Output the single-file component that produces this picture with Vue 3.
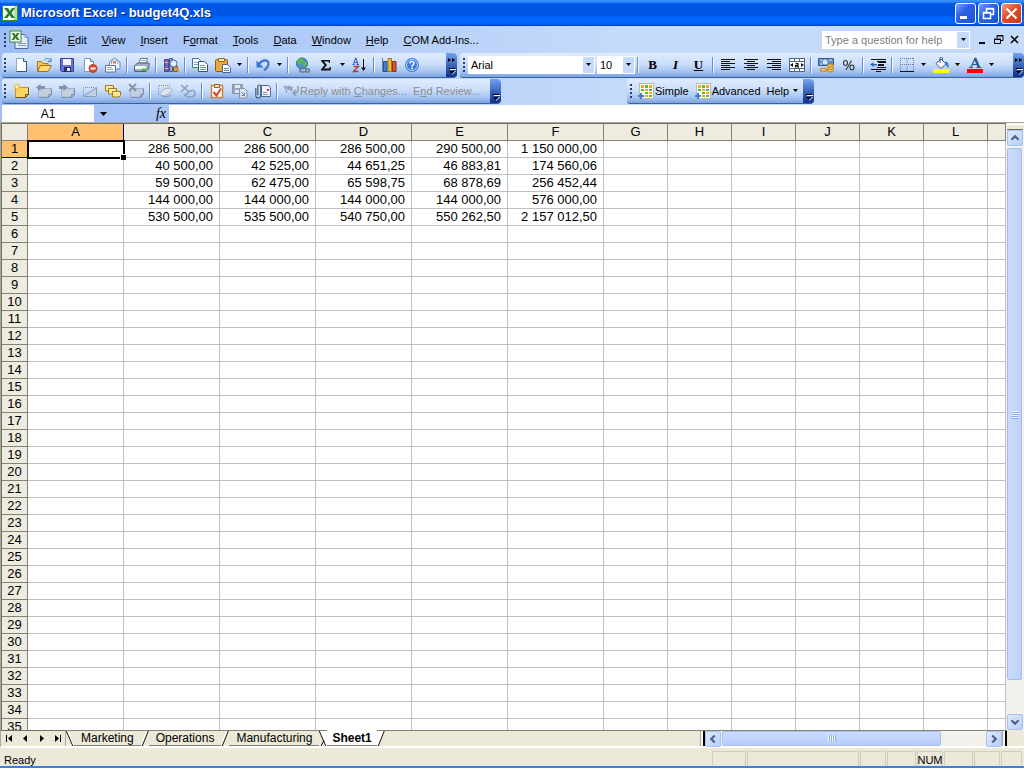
<script setup>
import { ref } from 'vue'

const menus = [
  ['', 'F', 'ile'], ['', 'E', 'dit'], ['', 'V', 'iew'], ['', 'I', 'nsert'], ['F', 'o', 'rmat'],
  ['', 'T', 'ools'], ['', 'D', 'ata'], ['', 'W', 'indow'], ['', 'H', 'elp'], ['', 'C', 'OM Add-Ins...']
]

const page = '<path d="M3.500 1.500h7l3 3v10h-10z" fill="#fff" stroke="#8fa9d0"/><path d="M10.500 1.500v3h3" fill="#cfe0f8" stroke="#3b5a8c"/><path d="M13.500 4.500v10h-10" fill="none" stroke="#33507f"/>'
const greyNote = '<path d="M2.500 5.500h12.500v6l-2.500 2.500h-10z" fill="#c3cede" stroke="#a3b0c6"/><path d="M2.500 14.500h10l3-3V5.500M12.500 14v-2.500H15" fill="none" stroke="#8191ad"/>'
const smallNote = (x, y) => `<path d="M${x} ${y}h8v4l-1.500 1.500h-6.500z" fill="#fbe48a" stroke="#a37a17"/><path d="M${x + 1} ${y + 1}h5" stroke="#fff6c8"/>`
const lines = (rows) => '<g fill="#111">' + rows.map(([x, w], i) => `<rect x="${x}" y="${2 + i * 2}" width="${w}" height="1"/>`).join('') + '</g>'
const schedule = '<rect x="1.500" y=".5" width="14" height="15" fill="#fff" stroke="#b9b9a8"/><g fill="#f5a51d"><rect x="3" y="2" width="3" height="3"/><rect x="11" y="2" width="3" height="3"/><rect x="7" y="6" width="3" height="2"/><rect x="11" y="9" width="3" height="2"/><rect x="7" y="12" width="3" height="2"/></g><g fill="#58bd2e"><rect x="7" y="2" width="3" height="3"/><rect x="3" y="6" width="3" height="2"/><rect x="11" y="6" width="3" height="2"/><rect x="7" y="9" width="3" height="2"/><rect x="11" y="12" width="3" height="2"/></g><path d="M3 10v6M0 13h6" stroke="#3d82d8" stroke-width="2"/>'

const icons = {
  excel: '<rect x=".5" y=".5" width="15" height="15" fill="#f7fff2" stroke="#3c8a35"/><path d="M12 1h3v14h-3z" fill="#b6dcae"/><path d="M2 3h4l2 3 2-3h3L9.500 8 13 13H9.500L7.500 10 5.500 13H2L6 8z" fill="#24812a"/>',
  workbook: '<path d="M8 4.500h8l3 3v11H6v-8" fill="#dfebff" stroke="#516b9c"/><path d="M16 4.500v3h3M9 13.500h8M9 15.500h8" fill="none" stroke="#7f9ccf"/><rect x="1" y="1" width="11" height="11" fill="#f7fff2" stroke="#3c8a35"/><path d="M2.500 3H5l1.500 2L8 3h2.500L8 6.500 10.500 10H8L6.500 8 5 10H2.500L5 6.500z" fill="#24812a"/>',
  new: page,
  open: '<path d="M1.500 14V4.500h4l1.500 2h5V9" fill="#f2c64e" stroke="#a07a22"/><path d="M1.500 14.500L4.500 8.500H15.500L12 14.500z" fill="#ffd878" stroke="#97721b"/><path d="M8 3.500c2-3 5-2.500 6.500 0m.5-2.500v3.500H11.500" fill="none" stroke="#4670a8"/>',
  save: '<path d="M1.500 1.500h13v13h-12l-1-1z" fill="#6b70d8" stroke="#3a3f9e"/><path d="M4 2h8v6H4z" fill="#f2f5ff"/><path d="M5 10h7v5H5z" fill="#272c63"/><path d="M8 11h3v3H8z" fill="#e3e6f8"/>',
  permission: '<path d="M2.500 1.500h6l3 3v10h-9z" fill="#fff" stroke="#7f98c0"/><path d="M8.500 1.500v3h3" fill="#cfe0f8" stroke="#5f7fae"/><circle cx="11" cy="11.500" r="4" fill="#e2472b" stroke="#c2391f"/><path d="M8.500 11.500h5" stroke="#fff" stroke-width="2"/>',
  mail: '<path d="M4.500 10V5L9.500 1l5.500 4v7h-4" fill="#eef4ff" stroke="#6b84ab"/><path d="M6.500 7V4h6v3" fill="#fff" stroke="#9aacc8"/><path d="M8 4.500h3v2H8z" fill="#e2653d"/><path d="M.5 8.500h10v6.500h-10z" fill="#fff" stroke="#5d7398"/><path d="M2 10.500h5M2 12.500h6" stroke="#8fa3c2"/>',
  print: '<path d="M4.500 7L6.500 1.500h7L12 7z" fill="#fff" stroke="#5f7691"/><path d="M7 3.500h5M6.500 5.500h5" stroke="#9aaac0"/><path d="M.5 9l3-3H15v5l-3 3.500H.5z" fill="#9fb0c2" stroke="#4f6175"/><path d="M1 9h11v3H1z" fill="#f0f4f8"/><path d="M8 11.500h4v2.500H8z" fill="#4bbd35"/>',
  research: '<path d="M1.500 2.500h4v12h-4z" fill="#7a5fc0" stroke="#4d3b91"/><path d="M1.500 5.500h4M1.500 11.500h4" stroke="#e5c65c"/><path d="M6.500 1.500h3v13h-3z" fill="#8fa6e8" stroke="#3d5aa0"/><path d="M10.500 9.500h4v5h-4z" fill="#d8a347" stroke="#80581a"/><circle cx="10.500" cy="6.500" r="3.500" fill="#dff0ff" stroke="#4d6c94"/><path d="M12.500 10l3 4" stroke="#d58a25" stroke-width="2"/>',
  copy: '<path d="M.5 1.500h6l2 2v7h-8z" fill="#fff" stroke="#4269a8"/><path d="M2 5.500h5M2 7.500h5" stroke="#7b9fd6"/><path d="M6.500 4.500h6l3 3v7h-9z" fill="#fff" stroke="#2c4f8d"/><path d="M8 8.500h5M8 10.500h6M8 12.500h6" stroke="#5f8bcb"/>',
  paste: '<rect x=".5" y="2.500" width="12" height="12" rx="1" fill="#eba93a" stroke="#8c5c14"/><path d="M3.500 1.500h6v3h-6z" fill="#fbe9a5" stroke="#8c6b29"/><path d="M7.500 7.500h5l3 3v5h-8z" fill="#fff" stroke="#46669c"/><path d="M9 11.500h5M9 13.500h5" stroke="#6288c2"/>',
  undo: '<path d="M4 7C7 2.500 13.500 2 13.500 6.500c0 3-2 5-4.500 7" fill="none" stroke="#3d74cf" stroke-width="2.200"/><path d="M1.500 3.500v7h7z" fill="#3d74cf"/>',
  link: '<circle cx="7" cy="6.500" r="5.500" fill="#4d92d8" stroke="#2e6596"/><path d="M2.500 3.500c2-3 4-2 6-1s-1 2-1 3-4 4-5 1zM8 6.500l4-2.500v4l-3 2z" fill="#58b84b"/><path d="M5 13a2 2 0 0 1 2-2h2a2 2 0 0 1 0 4H7a2 2 0 0 1-2-2zm5-1h3a1.500 1.500 0 0 1 0 3h-2" fill="none" stroke="#6a7788" stroke-width="1.500"/>',
  sum: '<path d="M3 3h9v3h-1L10.500 4.500H6L9 8 6 11.500h5L12 10h1l-.5 3.500H3V12.500L6.500 8 3 4z" fill="#111"/>',
  sort: '<path d="M.5 7.500h2M4.500 7.500h2.500M1.500 7.500L3.500 1h.5l2 6.500M2.500 5.500h3" fill="none" stroke="#2a54b5"/><path d="M1.500 9.500h5L1.500 14.500h5" fill="none" stroke="#ad3838" stroke-width="1.300"/><path d="M11.500 2v11" stroke="#111"/><path d="M9 10.500h5L11.500 14z" fill="#111"/>',
  chart: '<path d="M1.500 1v13.500H15.500" fill="none" stroke="#6282aa"/><path d="M2.500 4.500h3.500v10H2.500z" fill="#3d80da" stroke="#23569c"/><path d="M7 1.500h3.500v13H7z" fill="#f1bd31" stroke="#a77516"/><path d="M11.500 4.500H15v10h-3.500z" fill="#d6583a" stroke="#8e2f1b"/>',
  help: '<circle cx="8" cy="8" r="7" fill="#3d7be0"/><circle cx="8" cy="8" r="5.500" fill="none" stroke="#c5dafa"/><path d="M6 6.500c0-2.600 4-2.500 4-.2C10 8 8 7.600 8 9.500" fill="none" stroke="#fff" stroke-width="1.500"/><path d="M7.200 10.500h1.700v1.500H7.200z" fill="#fff"/>',
  folderNew: '<path d="M2.500 4.500h13v7l-3 3h-10z" fill="#f8d663" stroke="#c0962c"/><path d="M2.500 14.500h10l3-3V4.500M12.500 14v-2.500H15" fill="none" stroke="#70530e"/><path d="M4 0v8M0 4h8M1 1l6 6M7 1L1 7" stroke="#f6b820"/><circle cx="4" cy="4" r="1.500" fill="#fff8bc"/>',
  prev: greyNote + '<path d="M0 4.500L4.500 1v2H9v3H4.500v2z" fill="#8191ad"/>',
  next: greyNote + '<path d="M9 4.500L4.500 1v2H0v3h4.500v2z" fill="#8191ad"/>',
  note: '<path d="M1.500 13.500L14.500 4.500v9z" fill="#c3cede" stroke="#8d9bb4"/><path d="M1.500 13V4.500H13" fill="none" stroke="#7c8ba6" stroke-dasharray="1 1"/>',
  notes: smallNote(0.5, 2.5) + smallNote(3.5, 5.5) + smallNote(7.5, 8.5),
  delNote: greyNote + '<path d="M1 1l7 7M8 1L1 8" stroke="#8191ad" stroke-width="1.800"/>',
  ink: '<path d="M1.500 12V2.500H14" fill="none" stroke="#7c8ba6" stroke-dasharray="1 1"/><path d="M3 12c0-4 4-7 10-7 2 0 2 3 0 5l-5 3z" fill="#dce4ef" stroke="#a3b0c6"/><path d="M5 13.500c2 1 6 0 9-1" fill="none" stroke="#8191ad"/>',
  ink2: '<path d="M1 2l8 7M8 2L1 9" stroke="#8f9fb8" stroke-width="1.500"/><path d="M4 11c2 4 10 4 11 0s-3-4-5-3-3 3-5 5" fill="none" stroke="#8f9fb8" stroke-width="1.500"/>',
  review: '<rect x="2.500" y="2.500" width="11" height="12" fill="#fff" stroke="#cc8438" stroke-width="1.500"/><path d="M5.500 1.500h5v3h-5z" fill="#fde2a0" stroke="#876437"/><path d="M4.500 9l3 3.500L12 5.500" fill="none" stroke="#d84325" stroke-width="2"/>',
  update: '<path d="M.5 1.500h10v9H.5z" fill="#9aa8bf" stroke="#8494ad"/><path d="M3 2h5v3H3zM3 7h5v3H3z" fill="#e4eaf3"/><path d="M7.500 5.500h5l2.500 2.500v7H7.500z" fill="#dce4ef" stroke="#8494ad"/><path d="M9 9l3.500 3.500m0-3v3h-3" fill="none" stroke="#7586a2"/>',
  attach: '<path d="M6.500 2.500h7l2 2v9h-9z" fill="#eef4ff" stroke="#4f6796"/><path d="M12 6h2v2h-2z" fill="#e2341c"/><path d="M8 9.500h4M8 11.500h5" stroke="#7f92b3"/><path d="M.8 5v7.500a2.500 2.500 0 0 0 5 0v-9a1.500 1.500 0 0 0-3 0V12" fill="none" stroke="#4b5b75" stroke-width="1.200"/>',
  reply: '<path d="M1 3l3 1 2-1v4L4 6M6 4l3 0v4L7 7M1 3l3 7" fill="#98a7bf" stroke="#8b9ab3"/><path d="M15 3v4c0 2-2 3-4 3m2-3l-3 3 3 3" fill="none" stroke="#8b9ab3" stroke-width="1.500"/>',
  left: lines([[1, 14], [1, 9], [1, 14], [1, 9], [1, 14], [1, 9]]),
  center: lines([[1, 14], [4, 8], [1, 14], [4, 8], [1, 14], [4, 8]]),
  right: lines([[1, 14], [6, 9], [1, 14], [6, 9], [1, 14], [6, 9]]),
  merge: '<rect x=".5" y="1.500" width="15" height="13" fill="#fff" stroke="#4d6790"/><path d="M.5 4.500h15M.5 11.500h15M5.500 1.500v3M10.500 1.500v3M5.500 11.500v3M10.500 11.500v3" stroke="#4d6790"/><path d="M1 8l3-2v4zM15 8l-3-2v4z" fill="#111"/><path d="M6.500 6.500h2.500v3.500H6.500V8.300H9M9 10h1" fill="none" stroke="#111" stroke-width="1.200"/>',
  currency: '<path d="M.5 1.500h15v7H.5z" fill="#5b8cc8" stroke="#335d94"/><circle cx="7" cy="5" r="2.500" fill="#d7e7fa"/><path d="M2 3h2M11 3h3M2 7h2" stroke="#d7e7fa"/><g fill="#f8c956" stroke="#b87c1c"><ellipse cx="12.500" cy="13.500" rx="3" ry="1.500"/><ellipse cx="12.500" cy="11" rx="3" ry="1.500"/><ellipse cx="12.500" cy="8.500" rx="3" ry="1.500"/><ellipse cx="5.500" cy="13" rx="3.500" ry="1.500"/></g>',
  percent: '<g fill="none" stroke="#333" stroke-width="1.100"><ellipse cx="4.500" cy="6" rx="2" ry="2.500"/><ellipse cx="11" cy="10.500" rx="2" ry="2.500"/><path d="M10.500 3.500L5 13"/></g>',
  indent: '<g fill="#111"><path d="M1 2h15v1H1zM8 4h8v2H8zM8 7h6v2H8zM8 10h8v1H8zM1 12h15v1H1zM6 14h5v1H6z"/><path d="M7 4h1v1H7zM7 10h1v1H7z"/></g><path d="M0 7.500L3.500 5v2H7v1.500H3.500V10z" fill="#2d67cb"/>',
  borders: '<path d="M1.500 1v13M14.500 1v13M8 1v13M1 1.500h14M1 7.500h14" fill="none" stroke="#6179a0" stroke-dasharray="1 1"/><path d="M1 14.500h14" stroke="#111"/>',
  fill: '<path d="M0 12h16v4H0z" fill="#ff0"/><path d="M3 6.500L8 2l5 5-5 4.500z" fill="#f8fbff" stroke="#385984"/><path d="M7 6V1.500c0-2 2.500-2 2.500 0V4" fill="none" stroke="#385984"/><path d="M12 4.500c3 0 4 2 3.500 6.500-2-1-2.500-3-3.500-6.500z" fill="#3c7bd2"/>',
  fontColor: '<path d="M0 12h16v4H0z" fill="#f00"/><path d="M2 10.500h4M9.500 10.500h5M4 10L8 1.500 7 1.500M5.500 7.500h5" fill="none" stroke="#35578f" stroke-width="1.200"/><path d="M8 1l4 9.500" stroke="#35578f" stroke-width="2.500"/>',
  schedule
}

const standard = [
  ['new', 'New'], ['open', 'Open'], ['save', 'Save'], ['permission', 'Permission'], ['mail', 'E-mail'], '|',
  ['print', 'Print'], '|', ['research', 'Research'], '|', ['copy', 'Copy'], ['paste', 'Paste'], 'v', '|',
  ['undo', 'Undo'], 'v', '|', ['link', 'Insert Hyperlink'], ['sum', 'AutoSum'], 'v', ['sort', 'Sort Ascending'], '|',
  ['chart', 'Chart Wizard'], ['help', 'Excel Help']
]
const formatting = [
  ['left', 'Align Left'], ['center', 'Center'], ['right', 'Align Right'], ['merge', 'Merge and Center'], '|',
  ['currency', 'Currency Style'], ['percent', 'Percent Style'], '|', ['indent', 'Decrease Indent'], '|',
  ['borders', 'Borders'], 'v', ['fill', 'Fill Color'], 'v', ['fontColor', 'Font Color'], 'v'
]
const reviewing = [
  ['folderNew', 'New Comment'], ['prev', 'Previous Comment'], ['next', 'Next Comment'], ['note', 'Show Comment'],
  ['notes', 'Show All Comments'], ['delNote', 'Delete Comment'], '|', ['ink', 'Ink Annotations'], ['ink2', 'Delete Ink'], '|',
  ['review', 'Create Task'], ['update', 'Update File'], ['attach', 'Send as Attachment'], '|'
]

const wideCols = ['A', 'B', 'C', 'D', 'E', 'F']
const narrowCols = ['G', 'H', 'I', 'J', 'K', 'L']
const columns = [...wideCols, ...narrowCols, '']
const data = [
  ['286 500,00', '286 500,00', '286 500,00', '290 500,00', '1 150 000,00'],
  ['40 500,00', '42 525,00', '44 651,25', '46 883,81', '174 560,06'],
  ['59 500,00', '62 475,00', '65 598,75', '68 878,69', '256 452,44'],
  ['144 000,00', '144 000,00', '144 000,00', '144 000,00', '576 000,00'],
  ['530 500,00', '535 500,00', '540 750,00', '550 262,50', '2 157 012,50']
]
const cell = (r, c) => (c > 0 && data[r - 1] ? data[r - 1][c - 1] || '' : '')

const font = ref('Arial')
const size = ref('10')
const nameBox = ref('A1')
const formula = ref('')
const question = ref('')
</script>

<template>
  <div class="window">
    <header class="title">
      <svg class="ic" viewBox="0 0 16 16" v-html="icons.excel"></svg>
      <h1>Microsoft Excel - budget4Q.xls</h1>
      <button class="wb" aria-label="Minimize"><svg viewBox="0 0 19 19"><path d="M4 12h7v3H4z" fill="#fff" /></svg></button>
      <button class="wb" aria-label="Restore"><svg viewBox="0 0 19 19"><path d="M7.500 8V4.500h7v6H12M7 5h8M4.500 8.500h7v6h-7zM4 9h8" fill="none" stroke="#fff" stroke-width="1.500" /></svg></button>
      <button class="wb close" aria-label="Close"><svg viewBox="0 0 19 19"><path d="M4.500 4.500l10 10M14.500 4.500l-10 10" stroke="#fff" stroke-width="2.200" /></svg></button>
    </header>

    <div class="chrome">
      <nav class="menu">
        <i class="grip"></i>
        <svg class="book" viewBox="0 0 20 20" v-html="icons.workbook"></svg>
        <button v-for="m in menus" :key="m.join('')" class="menu-item">{{ m[0] }}<u>{{ m[1] }}</u>{{ m[2] }}</button>
        <div class="ask">
          <input v-model="question" aria-label="Type a question for help" placeholder="Type a question for help" />
          <button aria-label="Recent questions"><svg class="ar" viewBox="0 0 7 4"><path d="M1 0h5L3.500 3z" /></svg></button>
        </div>
        <button class="mdi" aria-label="Minimize workbook"><svg viewBox="0 0 11 11"><path d="M2 8h6v2H2z" /></svg></button>
        <button class="mdi" aria-label="Restore workbook"><svg viewBox="0 0 11 11"><path d="M4 4V1.500h6v5H8M4 2h6M1.500 5.500h6v4h-6zM1 5h7" fill="none" stroke="#000" /></svg></button>
        <button class="mdi" aria-label="Close workbook"><svg viewBox="0 0 11 11"><path d="M2 2l7 7M9 2L2 9" stroke="#000" stroke-width="1.500" /></svg></button>
      </nav>

      <div class="bars">
        <div class="bar standard" role="toolbar" aria-label="Standard">
          <i class="grip"></i>
          <template v-for="(t, i) in standard" :key="i">
            <i v-if="t === '|'" class="sep"></i>
            <button v-else-if="t === 'v'" class="drop" aria-label="More options"><svg class="ar" viewBox="0 0 7 4"><path d="M1 0h5L3.500 3z" /></svg></button>
            <button v-else class="tool" :aria-label="t[1]"><svg class="ic" viewBox="0 0 16 16" v-html="icons[t[0]]"></svg></button>
          </template>
          <button class="more push" aria-label="Toolbar options"><svg viewBox="0 0 11 24"><path d="M2 5l3 2-3 2zM6 5l3 2-3 2zM3 15h6v1H3zM3 18h6l-3 3z" fill="#000" /><path d="M4 16h6v1H4zM6 21l3-3h1l-4 4z" fill="#fff" /></svg></button>
        </div>
        <div class="bar grow" role="toolbar" aria-label="Formatting">
          <i class="grip"></i>
          <label class="combo face"><select v-model="font" aria-label="Font"><option>Arial</option></select><span><svg class="ar" viewBox="0 0 7 4"><path d="M1 0h5L3.500 3z" /></svg></span></label>
          <label class="combo size"><select v-model="size" aria-label="Font size"><option>10</option></select><span><svg class="ar" viewBox="0 0 7 4"><path d="M1 0h5L3.500 3z" /></svg></span></label>
          <i class="sep"></i>
          <button class="tool letter"><b>B</b></button>
          <button class="tool letter"><em>I</em></button>
          <button class="tool letter"><u>U</u></button>
          <i class="sep"></i>
          <template v-for="(t, i) in formatting" :key="i">
            <i v-if="t === '|'" class="sep"></i>
            <button v-else-if="t === 'v'" class="drop" aria-label="More options"><svg class="ar" viewBox="0 0 7 4"><path d="M1 0h5L3.500 3z" /></svg></button>
            <button v-else class="tool" :aria-label="t[1]"><svg class="ic" viewBox="0 0 16 16" v-html="icons[t[0]]"></svg></button>
          </template>
          <button class="more push" aria-label="Toolbar options"><svg viewBox="0 0 11 24"><path d="M2 5l3 2-3 2zM6 5l3 2-3 2zM3 15h6v1H3zM3 18h6l-3 3z" fill="#000" /><path d="M4 16h6v1H4zM6 21l3-3h1l-4 4z" fill="#fff" /></svg></button>
        </div>
      </div>

      <div class="bars">
        <div class="bar review" role="toolbar" aria-label="Reviewing">
          <i class="grip"></i>
          <template v-for="(t, i) in reviewing" :key="i">
            <i v-if="t === '|'" class="sep"></i>
            <button v-else class="tool" :aria-label="t[1]"><svg class="ic" viewBox="0 0 16 16" v-html="icons[t[0]]"></svg></button>
          </template>
          <button class="text off"><svg class="ic" viewBox="0 0 16 16" v-html="icons.reply"></svg><span>Reply with <u>C</u>hanges...</span></button>
          <button class="text off"><span>E<u>n</u>d Review...</span></button>
          <button class="more push" aria-label="Toolbar options"><svg viewBox="0 0 11 24"><path d="M3 15h6v1H3zM3 18h6l-3 3z" fill="#000" /><path d="M4 16h6v1H4zM6 21l3-3h1l-4 4z" fill="#fff" /></svg></button>
        </div>
        <div class="bar addin" role="toolbar" aria-label="Add-in">
          <i class="grip"></i>
          <button class="text"><svg class="ic" viewBox="0 0 16 16" v-html="icons.schedule"></svg><span>Simple</span></button>
          <button class="text"><svg class="ic" viewBox="0 0 16 16" v-html="icons.schedule"></svg><span>Advanced</span></button>
          <button class="text"><span>Help</span><svg class="ar" viewBox="0 0 7 4"><path d="M1 0h5L3.500 3z" /></svg></button>
          <button class="more push" aria-label="Toolbar options"><svg viewBox="0 0 11 24"><path d="M3 15h6v1H3zM3 18h6l-3 3z" fill="#000" /><path d="M4 16h6v1H4zM6 21l3-3h1l-4 4z" fill="#fff" /></svg></button>
        </div>
      </div>

      <div class="formula">
        <input v-model="nameBox" class="name" aria-label="Name box" />
        <button class="name-drop" aria-label="Defined names"><svg viewBox="0 0 7 4"><path d="M0 0h7L3.500 4z" /></svg></button>
        <button class="fx" aria-label="Insert Function"><em>fx</em></button>
        <input v-model="formula" class="expr" aria-label="Formula" />
      </div>
    </div>

    <main class="sheet">
      <div class="grid">
        <table>
          <colgroup>
            <col class="c-row" />
            <col v-for="c in wideCols" :key="c" class="c-wide" />
            <col v-for="c in narrowCols" :key="c" class="c-narrow" />
            <col />
          </colgroup>
          <thead>
            <tr>
              <td class="corner"></td>
              <th v-for="c in columns" :key="c" scope="col" :class="{ on: c === 'A' }">{{ c }}</th>
            </tr>
          </thead>
          <tbody>
            <tr v-for="r in 35" :key="r">
              <th scope="row" :class="{ on: r === 1 }">{{ r }}</th>
              <td v-for="(c, i) in columns" :key="c" :class="{ current: r === 1 && i === 0 }">{{ cell(r, i) }}</td>
            </tr>
          </tbody>
        </table>
      </div>
      <div class="vscroll">
        <i class="split"></i>
        <button class="sb" aria-label="Scroll up"><svg viewBox="0 0 16 16"><path d="M4 10l4-4 4 4" /></svg></button>
        <div class="vtrack"><div class="vthumb"><i></i><i></i><i></i><i></i></div></div>
        <button class="sb" aria-label="Scroll down"><svg viewBox="0 0 16 16"><path d="M4 6l4 4 4-4" /></svg></button>
      </div>
    </main>

    <div class="tabs">
      <div class="tablist">
        <button class="nav" aria-label="First sheet"><svg viewBox="0 0 9 9"><path d="M1 1h1v7H1zM7 1v7L3 4.500z" /></svg></button>
        <button class="nav" aria-label="Previous sheet"><svg viewBox="0 0 9 9"><path d="M6 1v7L2 4.500z" /></svg></button>
        <button class="nav" aria-label="Next sheet"><svg viewBox="0 0 9 9"><path d="M3 1v7l4-3.500z" /></svg></button>
        <button class="nav" aria-label="Last sheet"><svg viewBox="0 0 9 9"><path d="M2 1v7l4-3.500zM7 1h1v7H7z" /></svg></button>
        <i class="tabsep"></i>
        <svg class="slant" viewBox="0 0 8 16"><path d="M1 0l6 16" class="w" /><path d="M0 0l7 16" /></svg>
        <button class="tab">Marketing</button>
        <svg class="slant" viewBox="0 0 8 16"><path d="M6 0L0 16" class="w" /><path d="M7.500 0L1 16" /></svg>
        <button class="tab">Operations</button>
        <svg class="slant" viewBox="0 0 8 16"><path d="M6 0L0 16" class="w" /><path d="M7.500 0L1 16" /></svg>
        <button class="tab">Manufacturing</button>
        <svg class="slant" viewBox="0 0 8 16"><path d="M0 0h8v16H7z" class="f" /><path d="M0 0l7 16M5 10L2 16" /></svg>
        <button class="tab active">Sheet1</button>
        <svg class="slant" viewBox="0 0 8 16"><path d="M0 0h8L1 16H0z" class="f" /><path d="M7.500 0L1 16" /></svg>
        <i class="rest"></i>
      </div>
      <div class="hscroll">
        <i class="hsplit"></i>
        <button class="sb" aria-label="Scroll left"><svg viewBox="0 0 16 16"><path d="M10 4L6 8l4 4" /></svg></button>
        <div class="htrack"><div class="hthumb"><i></i><i></i><i></i><i></i></div></div>
        <button class="sb" aria-label="Scroll right"><svg viewBox="0 0 16 16"><path d="M6 4l4 4-4 4" /></svg></button>
        <i class="hsplit"></i>
      </div>
      <i class="cornerbox"></i>
    </div>

    <footer class="status">
      <span class="ready">Ready</span>
      <span class="p p34"></span><span class="p p112"></span><span class="p p25"></span><span class="p p29"></span>
      <span class="p p25">NUM</span><span class="p p29"></span><span class="p p25"></span><span class="p p20"></span>
    </footer>
  </div>
</template>

<style>
body { margin: 0; overflow: hidden; }
</style>

<style scoped>
* { box-sizing: border-box; }
button, input, select { font: inherit; color: inherit; border: 0; padding: 0; margin: 0; background: none; border-radius: 0; outline: 0; min-width: 0; }
svg { display: block; flex: none; }
i { display: block; flex: none; }
.window { display: flex; flex-direction: column; height: 100vh; overflow: hidden; font: 12px/16px "Liberation Sans", Arial, sans-serif; color: #000; background: #ece9d8; border-bottom: 2px solid #3a81e5; }
.ic { width: 16px; height: 16px; }
.ar { width: 7px; height: 4px; }

.title { display: flex; align-items: center; flex: none; height: 26px; padding: 0 2px; gap: 2px; background: linear-gradient(#2f86f5 0, #3c93ff 1px, #2783f7 2px, #0058e6 4px, #0054e3 14px, #0065fa 18px, #0067ff 23px, #003fc8 26px); }
.title h1 { flex: 1; margin: 0 0 0 1px; font-size: 13px; line-height: 20px; color: #fff; text-shadow: 1px 1px #0a2a8c; white-space: nowrap; }
.wb { width: 21px; height: 21px; border: 1px solid #fff; border-radius: 3px; background: linear-gradient(135deg, #7ba4f5, #2c63e4 40%, #1c4fd6); }
.wb svg { width: 19px; height: 19px; }
.close { background: linear-gradient(135deg, #f0a088, #df4f2c 45%, #c5381a); }

.chrome { flex: none; background: linear-gradient(90deg, #9ebef5, #c4dafa 60%, #c4dafa); }
.menu { display: flex; align-items: center; height: 27px; padding: 0 2px; font-size: 11px; }
.grip { width: 7px; height: 16px; background: radial-gradient(circle at 3px 2px, #27416f 0, #27416f 1px, transparent 1px) 0 0 / 7px 4px; }
.book { width: 20px; height: 20px; margin-right: -1px; }
.menu-item { height: 20px; padding: 0 7px; margin-right: 1px; line-height: 18px; white-space: nowrap; }
.ask { display: flex; width: 148px; height: 18px; margin: 0 4px 0 auto; background: #fff; }
.ask input { flex: 1; padding-left: 3px; }
.ask input::placeholder { color: #808080; opacity: 1; }
.ask button { width: 12px; margin: 1px; display: grid; place-items: center; background: #c4dafa; }
.mdi { width: 16px; height: 18px; display: grid; place-items: center; }
.mdi svg { width: 11px; height: 11px; }

.bars { display: flex; height: 26px; gap: 3px; padding-left: 2px; }
.bar { display: flex; align-items: center; height: 25px; border-bottom: 1px solid #3b619c; border-radius: 3px 4px 4px 3px; background: linear-gradient(#e0ebfd, #cbdffb 45%, #a9c6f3 75%, #7ba4e0); overflow: hidden; flex: none; }
.standard { width: 455px; }
.grow { flex: 1; min-width: 0; padding-left: 1px; }
.review { width: 499px; margin-right: 123px; }
.addin { width: 187px; padding-left: 1px; }
.tool { flex: none; width: 23px; height: 22px; display: grid; place-items: center; }
.drop { flex: none; width: 11px; height: 22px; display: grid; place-items: center; }
.sep { width: 6px; height: 16px; background: linear-gradient(90deg, transparent 2px, #6a8ccb 2px, #6a8ccb 3px, #f1f9ff 3px, #f1f9ff 4px, transparent 4px); }
.more { flex: none; width: 11px; height: 24px; background: linear-gradient(#75a1f0, #3a67bb 50%, #0b2f90); }
.more svg { width: 11px; height: 24px; }
.push { margin-left: auto; }
.combo { display: flex; flex: none; position: relative; height: 18px; background: #fff; }
.face { width: 127px; margin-right: 2px; }
.size { width: 38px; }
.combo select { appearance: none; width: 100%; padding-left: 3px; font-size: 11px; }
.combo span { position: absolute; right: 1px; top: 1px; width: 11px; height: 16px; display: grid; place-items: center; background: #c4dafa; pointer-events: none; }
.letter { font: bold 13px/16px "Liberation Serif", "Times New Roman", serif; }
.text { display: flex; flex: none; align-items: center; gap: 1px; height: 22px; padding: 0 3px; font-size: 11px; white-space: nowrap; }
.text .ar { margin-left: 2px; }
.off { color: #8d8d8d; }

.formula { display: flex; height: 17px; padding-left: 2px; }
.name { width: 92px; background: #fff; text-align: center; }
.name-drop { width: 18px; display: grid; place-items: center; }
.name-drop svg { width: 7px; height: 4px; }
.fx { width: 57px; padding-right: 3px; text-align: right; font: 14px/16px "Liberation Serif", serif; }
.expr { flex: 1; background: #fff; padding: 0 4px; }

.sheet { flex: 1; min-height: 0; display: flex; border-top: 1px solid #aca899; border-left: 1px solid #aca899; }
.grid { flex: 1; min-width: 0; overflow: hidden; border-top: 1px solid #716f64; border-left: 1px solid #716f64; background: #fff; }
table { table-layout: fixed; width: 100%; border-collapse: separate; border-spacing: 0; font-size: 13px; line-height: 15px; }
.c-row { width: 26px; }
.c-wide { width: 96px; }
.c-narrow { width: 64px; }
td, th { height: 17px; padding: 0; font-weight: normal; vertical-align: top; white-space: nowrap; border-right: 1px solid #c0c0c0; border-bottom: 1px solid #c0c0c0; }
td { padding-right: 6px; text-align: right; }
th, .corner { background: #eeebe0; border-color: #848274; text-align: center; padding: 0; }
th.on { background: #ffc06f; }
thead th.on { border-right-color: #000080; }
tbody th.on { border-bottom-color: #000080; }
.current { position: relative; }
.current::before { content: ""; position: absolute; inset: -1px -2px -2px -1px; border: 2px solid #000; }
.current::after { content: ""; position: absolute; right: -3px; bottom: -3px; width: 5px; height: 5px; background: #000; border: solid #fff; border-width: 1px 0 0 1px; }

.vscroll { display: flex; flex-direction: column; flex: none; width: 18px; padding: 0 1px; background: #f3f1ec; }
.split { height: 6px; margin-top: 1px; background: #ece9d8; border-bottom: 1px solid #716f64; border-top: 1px solid #fff; }
.sb { flex: none; width: 16px; height: 16px; border: 1px solid #a9c1f0; border-radius: 2px; background: linear-gradient(135deg, #dfe9ff, #b8cdfb); }
.sb svg { width: 14px; height: 14px; fill: none; stroke: #4d6185; stroke-width: 2.5; }
.vtrack { flex: 1; padding-top: 2px; }
.vthumb { height: 94%; width: 15px; display: flex; flex-direction: column; align-items: center; justify-content: center; gap: 1px; border: 1px solid #a5bdf0; border-radius: 2px; background: linear-gradient(90deg, #cddcfd, #bdd1fb); }
.vthumb i { width: 7px; height: 1px; background: #eef4fe; box-shadow: 0 1px #8cb0f8; }

.tabs { display: flex; flex: none; height: 18px; border-left: 1px solid #aca899; border-bottom: 2px solid #fff; }
.tablist { flex: 1; min-width: 0; display: flex; overflow: hidden; }
.nav { width: 16px; display: grid; place-items: center; border-top: 1px solid #716f64; }
.nav svg { width: 9px; height: 9px; }
.tabsep { width: 1px; background: #aca899; }
.slant { width: 8px; height: 16px; fill: none; stroke: #000; border-top: 1px solid #848274; }
.slant .w { stroke: #fff; stroke-width: 2; }
.slant .f { fill: #fff; stroke: none; }
.tab { flex: none; padding: 1px 7px 0; border-top: 1px solid #848274; border-bottom: 1px solid #848274; white-space: nowrap; line-height: 13px; }
.tab:first-of-type { padding: 1px 5px 0; }
.active { padding: 1px 5px 0; background: #fff; border-top-color: #fff; font-weight: bold; }
.rest { flex: 1; border-top: 1px solid #848274; }
.hscroll { display: flex; width: 30%; flex: none; border-top: 1px solid #848274; }
.hsplit { width: 5px; border-right: 2px solid #000; border-left: 1px solid #aca899; background: #f8f6ee; }
.htrack { flex: 1; padding-left: 1px; background: #f3f1ec; }
.hthumb { width: 83%; height: 15px; display: flex; align-items: center; justify-content: center; gap: 1px; border: 1px solid #a5bdf0; border-radius: 2px; background: linear-gradient(#cddcfd, #b6ccfa); }
.hthumb i { width: 1px; height: 7px; background: #eef4fe; box-shadow: 1px 0 #8cb0f8; }
.cornerbox { width: 17px; }

.status { display: flex; flex: none; height: 18px; padding: 3px 2px 0 4px; gap: 1px; }
.ready { flex: 1; line-height: 18px; height: 15px; font-size: 11px; }
.p { display: flex; justify-content: center; height: 15px; border: 1px solid #cfccc2; border-bottom: 0; line-height: 16px; font-size: 11px; white-space: nowrap; }
.p34 { width: 34px; }
.p112 { width: 112px; }
.p25 { width: 26px; }
.p29 { width: 29px; }
.p20 { width: 21px; }
</style>
